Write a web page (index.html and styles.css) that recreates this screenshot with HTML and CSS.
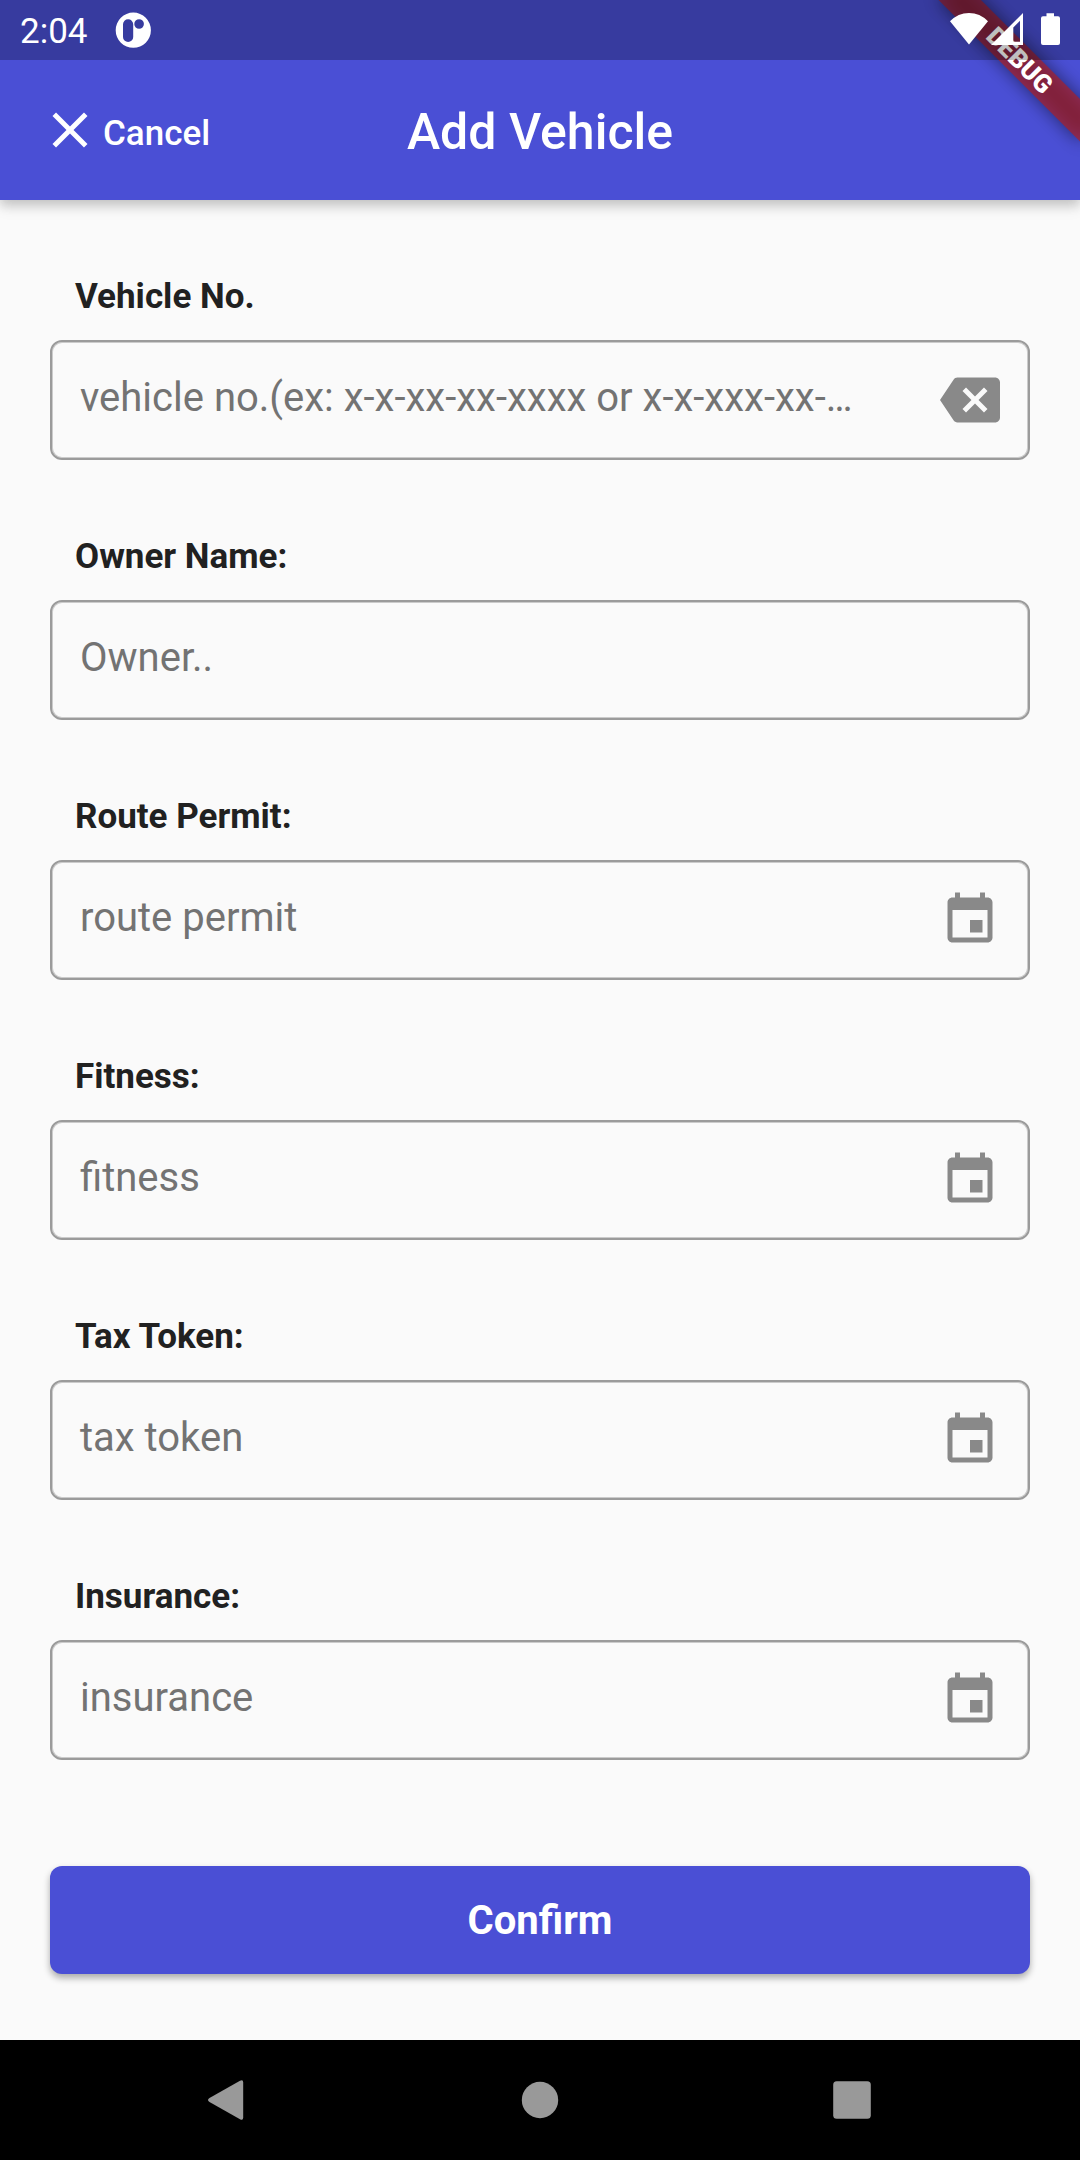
FILE: index.html
```html
<!DOCTYPE html>
<html lang="en">
<head>
<meta charset="utf-8">
<title>Add Vehicle</title>
<link rel="stylesheet" href="styles.css">
</head>
<body>
<svg class="symbols" aria-hidden="true">
  <symbol id="event" viewBox="0 0 24 24"><path d="M17 12h-5v5h5v-5zM16 1v2H8V1H6v2H5c-1.11 0-1.99.9-1.99 2L3 19c0 1.1.89 2 2 2h14c1.1 0 2-.9 2-2V5c0-1.1-.9-2-2-2h-1V1h-2zm3 18H5V8h14v11z"/></symbol>
</svg>
<div class="screen">
  <header class="top">
    <div class="status">
      <span class="time">2:04</span>
      <svg class="app-dot" width="36" height="36" viewBox="0 0 36 36"><path fill-rule="evenodd" d="M18.300 .6a17.600 17.600 0 1 1 0 35.200a17.600 17.600 0 1 1 0-35.200zM13.100 7.200a5.100 5.100 0 0 0-5.100 5.100v12.600a5.100 5.100 0 0 0 10.200 0v-12.600a5.100 5.100 0 0 0-5.100-5.100zM24.100 7.200a4.800 4.800 0 1 0 0 9.600a4.800 4.800 0 1 0 0-9.600z"/></svg>
      <svg class="signals" width="110" height="34" viewBox="0 0 110 34">
        <path d="M0 9.3Q8 1 19 1Q30 1 38 9.3L19 32.4z"/>
        <path fill-rule="evenodd" d="M73 1V33H41zM70 8.7L63.3 15.4V29.8H70z"/>
        <path d="M96.500 1.300h7.500v3h4q2 0 2 2v24.700q0 2-2 2h-15q-2 0-2-2v-24.700q0-2 2-2h3.500z"/>
      </svg>
    </div>
    <div class="appbar">
      <div class="cancel">
        <svg width="60" height="60" viewBox="0 0 24 24"><path d="M19 6.410L17.590 5 12 10.590 6.410 5 5 6.410 10.590 12 5 17.590 6.410 19 12 13.410 17.590 19 19 17.590 13.410 12z"/></svg>
        <span>Cancel</span>
      </div>
      <h1 class="title">Add Vehicle</h1>
    </div>
    <div class="banner-area">
      <div class="banner-shadow"></div>
      <div class="banner">DEBUG</div>
    </div>
  </header>
  <main class="form">
    <div class="group">
      <div class="label">Vehicle No.</div>
      <div class="field"><span class="hint">vehicle no.(ex: x-x-xx-xx-xxxx or x-x-xxx-xx-…</span><svg class="icon" viewBox="0 0 24 24"><path d="M22 3H7c-.69 0-1.230.350-1.590.880L0 12l5.410 8.110c.360.530.900.890 1.590.890h15c1.100 0 2-.900 2-2V5c0-1.100-.900-2-2-2zm-3 12.590L17.590 17 14 13.410 10.410 17 9 15.590 12.590 12 9 8.410 10.410 7 14 10.590 17.590 7 19 8.410 15.410 12 19 15.590z"/></svg></div>
    </div>
    <div class="group">
      <div class="label">Owner Name:</div>
      <div class="field"><span class="hint">Owner..</span></div>
    </div>
    <div class="group">
      <div class="label">Route Permit:</div>
      <div class="field"><span class="hint">route permit</span><svg class="icon"><use href="#event"/></svg></div>
    </div>
    <div class="group">
      <div class="label">Fitness:</div>
      <div class="field"><span class="hint">fitness</span><svg class="icon"><use href="#event"/></svg></div>
    </div>
    <div class="group">
      <div class="label">Tax Token:</div>
      <div class="field"><span class="hint">tax token</span><svg class="icon"><use href="#event"/></svg></div>
    </div>
    <div class="group">
      <div class="label">Insurance:</div>
      <div class="field"><span class="hint">insurance</span><svg class="icon"><use href="#event"/></svg></div>
    </div>
    <button class="confirm" type="button">Confirm</button>
  </main>
  <nav class="navbar">
    <svg width="40" height="44" viewBox="0 0 40 44"><path d="M32 2.700Q35.200 1 35.200 4.500V39.500Q35.200 43 32 41.300L1.500 24Q-1.500 22 1.500 20z"/></svg>
    <svg width="40" height="44" viewBox="0 0 40 44"><circle cx="20" cy="22" r="18.200"/></svg>
    <svg width="40" height="44" viewBox="0 0 40 44"><rect x="1.200" y="3.200" width="37.600" height="37.600" rx="3.500"/></svg>
  </nav>
</div>
</body>
</html>
```
FILE: styles.css
```css
* {
  box-sizing: border-box;
}

body {
  margin: 0;
  font-family: Roboto, "Liberation Sans", sans-serif;
}

svg {
  display: block;
  flex: none;
}

.symbols {
  position: absolute;
  width: 0;
  height: 0;
}

.screen {
  display: flex;
  flex-direction: column;
  width: 1080px;
  height: 2160px;
  overflow: hidden;
  background: #fafafa;
}

.top {
  position: relative;
  flex: none;
  height: 200px;
  background: #4a4fd5;
  color: #fff;
  fill: #fff;
  box-shadow: 0 5px 10px rgba(0, 0, 0, 0.16), 0 8px 14px rgba(0, 0, 0, 0.08);
}

.status {
  position: relative;
  z-index: 2;
  display: flex;
  align-items: center;
  height: 60px;
  padding: 0 20px;
  background: rgba(0, 0, 0, 0.25);
}

.time {
  width: 95px;
  padding-top: 2px;
  font-size: 35px;
  line-height: 41px;
}

.signals {
  margin: 0 0 3px auto;
}

.appbar {
  display: grid;
  grid-template-columns: 1fr auto 1fr;
  align-items: center;
  height: 140px;
  padding: 0 40px;
}

.cancel {
  display: flex;
  align-items: center;
  font-size: 35px;
  font-weight: 500;
  line-height: 41px;
}

.cancel span {
  padding: 7px 0 0 3px;
}

.title {
  margin: 0;
  padding-top: 3px;
  font-size: 50px;
  font-weight: 500;
  line-height: 58px;
}

.banner-area {
  position: absolute;
  z-index: 1;
  top: 0;
  right: 0;
  width: 220px;
  height: 200px;
  overflow: hidden;
}

.banner,
.banner-shadow {
  position: absolute;
  top: 70px;
  left: 120px;
  width: 200px;
  height: 30px;
  transform: rotate(45deg);
  transform-origin: 100px -70px;
}

.banner {
  background: rgba(183, 28, 28, 0.63);
  font-size: 25.5px;
  font-weight: 900;
  line-height: 30px;
  text-align: center;
}

.banner-shadow {
  background: rgba(0, 0, 0, 0.5);
  filter: blur(9px);
}

.form {
  display: flex;
  flex: 1;
  flex-direction: column;
  gap: 75px;
  padding: 76px 50px 0;
}

.group {
  display: flex;
  flex-direction: column;
  gap: 23px;
}

.group + .group {
  padding-top: 1px;
}

.label {
  padding-left: 25px;
  color: #212121;
  font-size: 35px;
  font-weight: 700;
  line-height: 41px;
}

.field {
  display: flex;
  align-items: center;
  justify-content: space-between;
  height: 120px;
  padding: 0 28px;
  border: 2px solid #9b9b9b;
  border-radius: 12px;
  box-shadow: inset 0 0 0 1px #cbcbcb;
}

.hint {
  padding-bottom: 5px;
  color: #737373;
  font-size: 40px;
  line-height: 47px;
  white-space: nowrap;
}

.icon {
  width: 60px;
  height: 60px;
  fill: #898989;
}

.confirm {
  height: 108px;
  margin-top: 31px;
  padding: 0;
  border: 0;
  border-radius: 12px;
  background: #4a4fd5;
  box-shadow: 0 4px 7px rgba(0, 0, 0, 0.32);
  color: #fff;
  font: 700 40px/47px Roboto, "Liberation Sans", sans-serif;
}

.navbar {
  display: flex;
  flex: none;
  align-items: center;
  justify-content: center;
  gap: 272px;
  height: 120px;
  background: #000;
  fill: #999;
}
```
